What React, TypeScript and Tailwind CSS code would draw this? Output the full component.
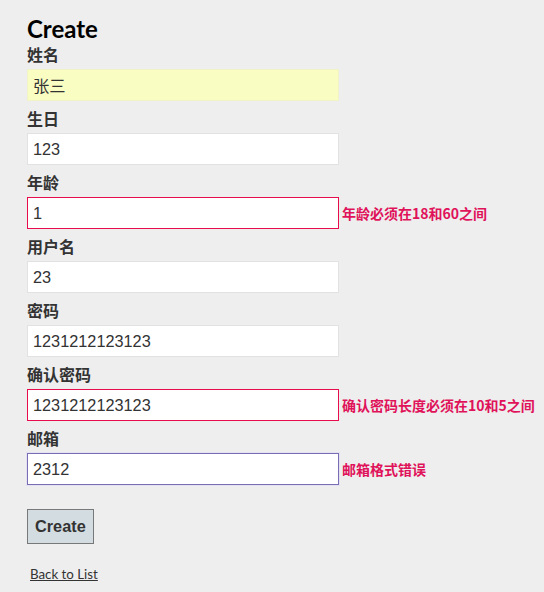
import React from "react";

type Field = {
  label: string;
  value: string;
  error?: string;
  state?: "autofill" | "error" | "focus";
};

const fields: Field[] = [
  { label: "姓名", value: "张三", state: "autofill" },
  { label: "生日", value: "123" },
  { label: "年龄", value: "1", error: "年龄必须在18和60之间", state: "error" },
  { label: "用户名", value: "23" },
  { label: "密码", value: "1231212123123" },
  { label: "确认密码", value: "1231212123123", error: "确认密码长度必须在10和5之间", state: "error" },
  { label: "邮箱", value: "2312", error: "邮箱格式错误", state: "focus" },
];

const cjk = "font-['Noto_Sans_CJK_SC',sans-serif]";

function FieldRow({ field }: { field: Field }) {
  const [value, setValue] = React.useState(field.value);

  let inputClass = "border-[#e2e2e2] bg-white";
  if (field.state === "autofill") inputClass = "border-[#f0f2c8] bg-[#fafdc2]";
  if (field.state === "error") inputClass = "border-[#e80c4d] bg-white";
  if (field.state === "focus") inputClass = "border-[#7b6cb6] bg-white shadow-[0_0_0_1px_#e4e1f1]";

  return (
    <div>
      <div className={`h-[32px] pt-[5px] text-[16px] leading-[24px] font-bold text-[#333] ${cjk}`}>
        {field.label}
      </div>
      <div className="flex items-center whitespace-nowrap">
        <input
          value={value}
          onChange={(e) => setValue(e.target.value)}
          className={`h-[32px] w-[312px] shrink-0 border px-[5px] text-[16.3px] text-[#333] outline-none font-['Liberation_Sans','Noto_Sans_CJK_SC',sans-serif] ${inputClass}`}
        />
        {field.error ? (
          <span className={`ml-[3px] shrink-0 text-[14px] font-bold text-[#e0125a] ${cjk}`}>
            {field.error}
          </span>
        ) : null}
      </div>
    </div>
  );
}

export default function App() {
  return (
    <div className="min-h-screen w-full overflow-hidden bg-[#eeeeee] px-[27px]">
      <h2 className="h-[37px] pt-[17px] text-[24px] leading-[24px] font-bold text-black font-['Lato',sans-serif]">
        Create
      </h2>

      <form onSubmit={(e) => e.preventDefault()}>
        {fields.map((field) => (
          <FieldRow key={field.label} field={field} />
        ))}

        <div className="pt-[24px]">
          <button
            type="submit"
            className="h-[35px] border border-[#787878] bg-[#d3dce0] px-[7px] text-[16.3px] font-bold text-[#333] font-['Liberation_Sans',sans-serif]"
          >
            Create
          </button>
        </div>
      </form>

      <div className="pt-[20px] pl-[3px] text-[13.3px] leading-[20px] font-['Lato',sans-serif]">
        <a href="#" className="text-[#333] underline">
          Back to List
        </a>
      </div>
    </div>
  );
}
